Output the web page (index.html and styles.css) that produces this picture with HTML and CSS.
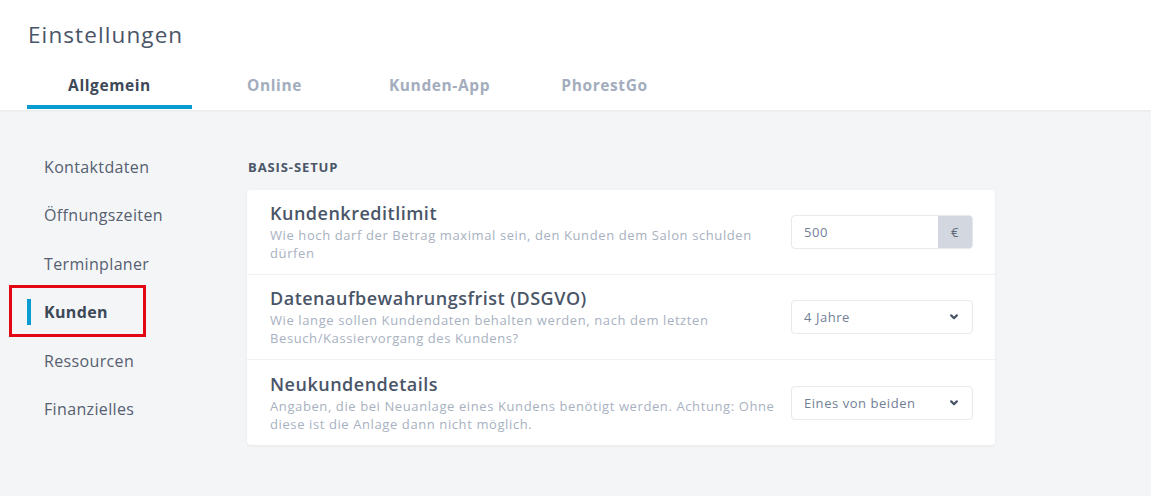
FILE: index.html
```html
<!DOCTYPE html>
<html lang="de">
<head>
<meta charset="utf-8">
<title>Einstellungen</title>
<link rel="stylesheet" href="styles.css">
</head>
<body>
<header class="topbar">
  <h1 class="page-title">Einstellungen</h1>
  <nav class="tabs">
    <a class="tab active">Allgemein</a>
    <a class="tab">Online</a>
    <a class="tab">Kunden-App</a>
    <a class="tab">PhorestGo</a>
  </nav>
</header>
<main class="layout">
  <aside class="sidenav">
    <a class="side-item">Kontaktdaten</a>
    <a class="side-item">Öffnungszeiten</a>
    <a class="side-item">Terminplaner</a>
    <a class="side-item active">Kunden</a>
    <a class="side-item">Ressourcen</a>
    <a class="side-item">Finanzielles</a>
  </aside>
  <section class="content">
    <h2 class="section-title">BASIS-SETUP</h2>
    <div class="card">
      <div class="row">
        <div class="row-text">
          <div class="row-title">Kundenkreditlimit</div>
          <div class="row-desc">Wie hoch darf der Betrag maximal sein, den Kunden dem Salon schulden dürfen</div>
        </div>
        <div class="control input-group">
          <span class="input-value">500</span>
          <span class="addon">€</span>
        </div>
      </div>
      <div class="row">
        <div class="row-text">
          <div class="row-title">Datenaufbewahrungsfrist (DSGVO)</div>
          <div class="row-desc">Wie lange sollen Kundendaten behalten werden, nach dem letzten Besuch/Kassiervorgang des Kundens?</div>
        </div>
        <div class="control select">
          <span class="input-value">4 Jahre</span>
          <svg class="chevron" viewBox="0 0 8 6" width="8" height="6"><path d="M1.2 1.4 L4 4.2 L6.8 1.4" fill="none" stroke="#4a5568" stroke-width="2.2" stroke-linecap="round" stroke-linejoin="round"/></svg>
        </div>
      </div>
      <div class="row">
        <div class="row-text">
          <div class="row-title">Neukundendetails</div>
          <div class="row-desc">Angaben, die bei Neuanlage eines Kundens benötigt werden. Achtung: Ohne diese ist die Anlage dann nicht möglich.</div>
        </div>
        <div class="control select">
          <span class="input-value">Eines von beiden</span>
          <svg class="chevron" viewBox="0 0 8 6" width="8" height="6"><path d="M1.2 1.4 L4 4.2 L6.8 1.4" fill="none" stroke="#4a5568" stroke-width="2.2" stroke-linecap="round" stroke-linejoin="round"/></svg>
        </div>
      </div>
    </div>
  </section>
</main>
</body>
</html>
```
FILE: styles.css
```css
*, *::before, *::after { box-sizing: border-box; }
html, body { margin: 0; padding: 0; }
body {
  font-family: "Open Sans", "Noto Sans", sans-serif;
  background: #f4f5f7;
  color: #4a5568;
  min-height: 496px;
}
.topbar {
  background: #fff;
  height: 110px;
  padding: 20px 27px 0;
  display: flex;
  flex-direction: column;
  box-shadow: 0 1px 3px rgba(0,0,0,0.06);
  position: relative;
}
.page-title {
  margin: 0 0 0 1px;
  font-size: 22.5px;
  font-weight: 500;
  line-height: 30px;
  color: #4a5568;
  letter-spacing: 1.1px;
}
.tabs {
  display: flex;
  margin-top: 16px;
}
.tab {
  width: 165px;
  height: 43px;
  line-height: 39px;
  text-align: center;
  font-size: 15.5px;
  font-weight: 700;
  letter-spacing: 0.6px;
  color: #a3adbd;
  border-bottom: 4px solid transparent;
}
.tab.active {
  color: #3d4858;
  border-bottom-color: #0a9bd1;
}
.layout {
  display: flex;
  padding: 33px 0 0 27px;
}
.sidenav {
  width: 220px;
  display: flex;
  flex-direction: column;
}
.side-item {
  position: relative;
  height: 48.4px;
  line-height: 48px;
  padding-left: 17px;
  font-size: 16px;
  letter-spacing: 0.35px;
  color: #556070;
}
.side-item.active {
  font-weight: 700;
  color: #3d4858;
}
.side-item.active::before {
  content: "";
  position: absolute;
  left: 0;
  top: 11px;
  width: 4px;
  height: 26px;
  background: #0a9bd1;
}
.side-item.active::after {
  content: "";
  position: absolute;
  left: -18px;
  top: -3px;
  width: 137px;
  height: 52px;
  border: 3px solid #e30613;
}
.content {
  width: 748px;
}
.section-title {
  margin: 0 0 14px 1px;
  font-size: 13px;
  line-height: 18px;
  font-weight: 700;
  letter-spacing: 0.9px;
  color: #4a5568;
  padding-top: 15px;
}
.card {
  background: #fff;
  border-radius: 4px;
  box-shadow: 0 1px 3px rgba(0,0,0,0.06);
}
.row {
  height: 85px;
  display: flex;
  align-items: center;
  padding: 0 22px 0 23px;
  border-bottom: 1px solid #eef1f5;
}
.row:last-child { border-bottom: 0; }
.row-text {
  width: 521px;
  padding-right: 2px;
}
.row-title {
  font-size: 18px;
  font-weight: 600;
  line-height: 22px;
  letter-spacing: 0.5px;
  color: #4a5568;
}
.row-desc {
  margin-top: 2px;
  font-size: 13px;
  line-height: 18px;
  letter-spacing: 0.6px;
  color: #a8b1bf;
}
.control {
  width: 182px;
  height: 34px;
  border: 1px solid #e6e9ee;
  border-radius: 4px;
  display: flex;
  align-items: center;
  font-size: 13px;
  letter-spacing: 0.55px;
  color: #718096;
}
.input-value {
  flex: 1;
  padding-left: 12px;
}
.addon {
  width: 34px;
  height: 100%;
  background: #d3d8e0;
  display: flex;
  align-items: center;
  justify-content: center;
  color: #5c6677;
  border-radius: 0 3px 3px 0;
}
.chevron {
  margin-right: 14px;
}
```
